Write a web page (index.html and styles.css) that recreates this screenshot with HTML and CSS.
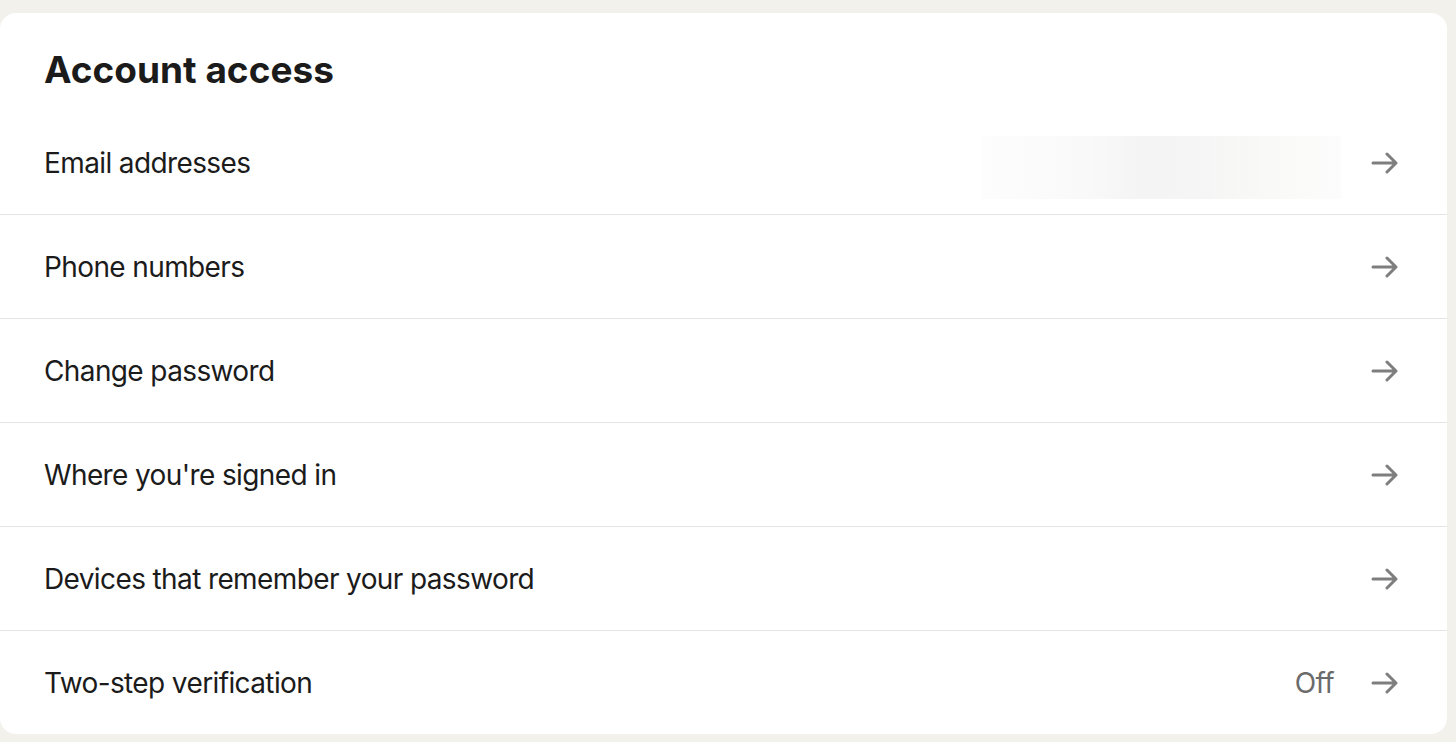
FILE: index.html
```html
<!DOCTYPE html>
<html>
<head>
<meta charset="utf-8">
<link rel="stylesheet" href="styles.css">
</head>
<body>
<section class="card">
  <h1 class="title">Account access</h1>
  <ul class="list">
    <li class="row"><span class="label">Email addresses</span><span class="meta"><span class="blur"></span><svg class="arrow" viewBox="0 0 28 22"><path d="M2 11H25M16 2l9 9-9 9"/></svg></span></li>
    <li class="row"><span class="label">Phone numbers</span><span class="meta"><svg class="arrow" viewBox="0 0 28 22"><path d="M2 11H25M16 2l9 9-9 9"/></svg></span></li>
    <li class="row"><span class="label">Change password</span><span class="meta"><svg class="arrow" viewBox="0 0 28 22"><path d="M2 11H25M16 2l9 9-9 9"/></svg></span></li>
    <li class="row"><span class="label">Where you're signed in</span><span class="meta"><svg class="arrow" viewBox="0 0 28 22"><path d="M2 11H25M16 2l9 9-9 9"/></svg></span></li>
    <li class="row"><span class="label">Devices that remember your password</span><span class="meta"><svg class="arrow" viewBox="0 0 28 22"><path d="M2 11H25M16 2l9 9-9 9"/></svg></span></li>
    <li class="row"><span class="label">Two-step verification</span><span class="meta"><span class="value">Off</span><svg class="arrow" viewBox="0 0 28 22"><path d="M2 11H25M16 2l9 9-9 9"/></svg></span></li>
  </ul>
</section>
</body>
</html>
```

FILE: styles.css
```css
html, body {
  margin: 0;
  padding: 0;
  background: #f2f1ec;
}
body {
  font-family: Inter, "Noto Sans", sans-serif;
  color: #1b1b1b;
  padding-top: 13px;
}
.card {
  width: 1447px;
  height: 721px;
  background: #ffffff;
  border-radius: 16px;
  box-sizing: border-box;
}
.title {
  margin: 0;
  padding: 33px 0 0 44px;
  height: 98px;
  box-sizing: border-box;
  font-size: 37px;
  font-weight: 700;
  letter-spacing: 0;
  line-height: 48px;
}
.list {
  list-style: none;
  margin: 0;
  padding: 0;
}
.row {
  height: 103px;
  display: flex;
  align-items: center;
  justify-content: space-between;
  padding: 0 48px 0 44px;
  border-bottom: 1px solid #e6e5e3;
}
.row:last-child {
  border-bottom: none;
}
.label {
  font-size: 28px;
  letter-spacing: -0.022em;
  color: #1b1b1b;
}
.meta {
  display: flex;
  align-items: center;
}
.value {
  font-size: 28px;
  color: #6b6b6b;
  letter-spacing: -0.02em;
  margin-right: 37px;
}
.blur {
  width: 360px;
  height: 63px;
  margin: 10px 30px 0 0;
  background: linear-gradient(90deg, #fdfdfd 0%, #f9f9f9 30%, #f4f4f4 45%, #f5f5f5 60%, #f9f9f8 80%, #fcfcfc 100%);
}
.arrow {
  width: 28px;
  height: 22px;
  fill: none;
  stroke: #7e7e7e;
  stroke-width: 3;
  stroke-linecap: round;
  stroke-linejoin: round;
}
```
